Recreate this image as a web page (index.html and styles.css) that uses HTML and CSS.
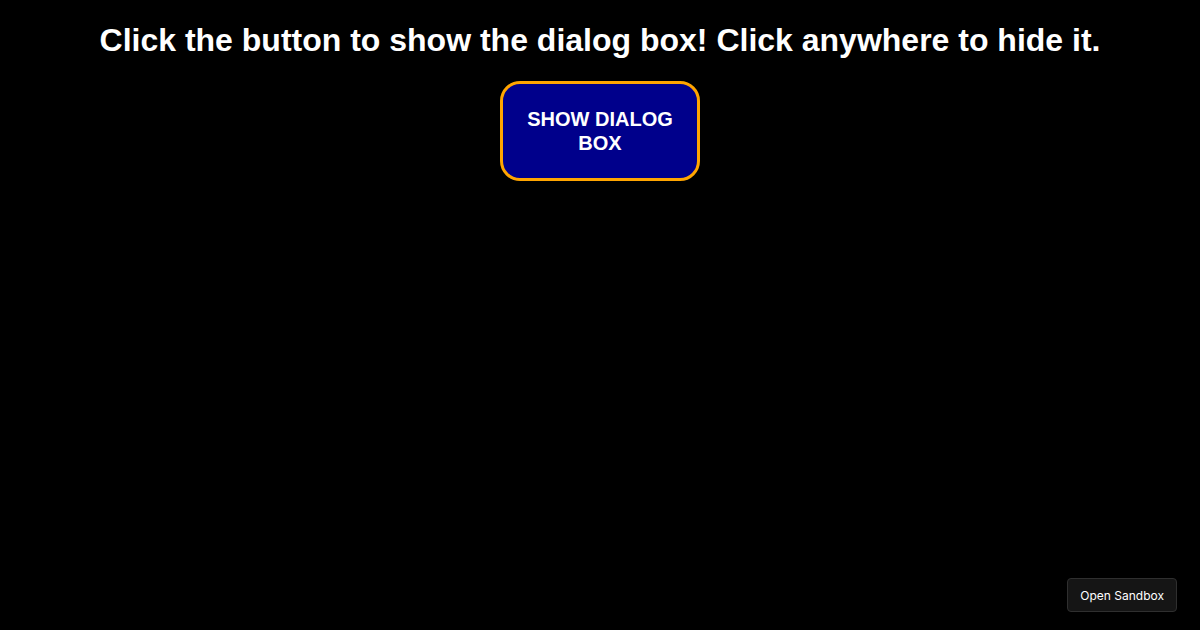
FILE: index.html
```html
<!DOCTYPE html>
<html>
<head>
<meta charset="utf-8">
<link rel="stylesheet" href="styles.css">
</head>
<body>
<div class="app">
  <h1 class="title">Click the button to show the dialog box! Click anywhere to hide it.</h1>
  <button class="show-btn">SHOW DIALOG BOX</button>
</div>
<a class="sandbox-btn">Open Sandbox</a>
</body>
</html>
```
FILE: styles.css
```css
html, body {
  margin: 0;
  padding: 0;
  background: #000;
  height: 100%;
}
body {
  font-family: "Liberation Sans", Arial, sans-serif;
  color: #fff;
}
.app {
  display: flex;
  flex-direction: column;
  align-items: center;
  padding-top: 22px;
}
.title {
  margin: 0;
  font-size: 32px;
  font-weight: bold;
  line-height: 37px;
  text-align: center;
}
.show-btn {
  margin-top: 22px;
  width: 200px;
  height: 100px;
  box-sizing: border-box;
  background: #00008b;
  border: 3px solid #ffa500;
  border-radius: 20px;
  color: #fff;
  font-family: "Liberation Sans", Arial, sans-serif;
  font-size: 20px;
  font-weight: bold;
  line-height: 24px;
  padding: 0 20px;
}
.sandbox-btn {
  position: fixed;
  right: 23px;
  bottom: 18px;
  box-sizing: border-box;
  height: 34px;
  padding: 0 12px;
  display: flex;
  align-items: center;
  background: #151515;
  border: 1px solid #2f2f2f;
  border-radius: 4px;
  color: #fff;
  font-family: Inter, "Noto Sans", sans-serif;
  font-size: 12px;
}
```
